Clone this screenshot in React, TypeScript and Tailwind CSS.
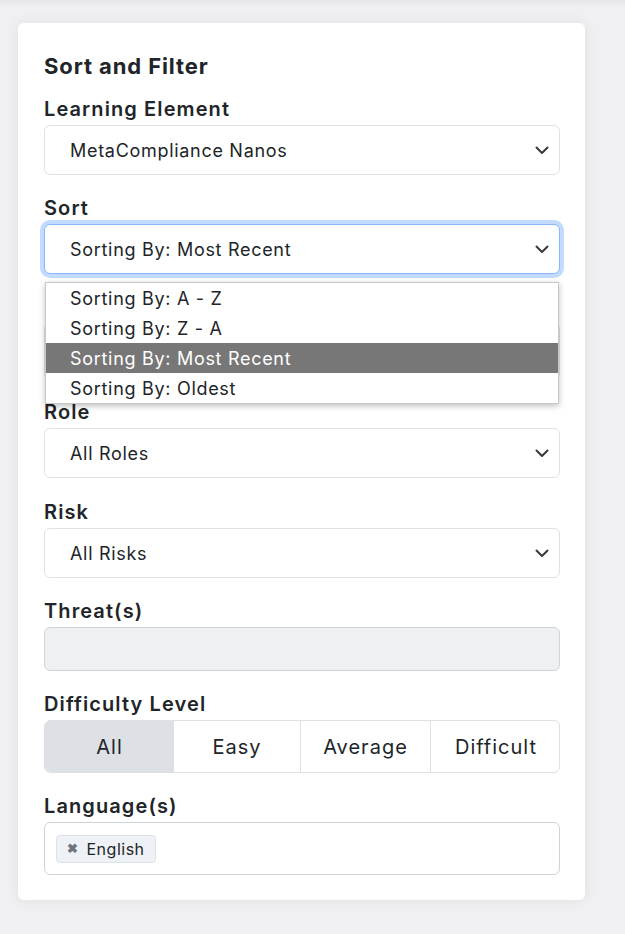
import React from "react";

const font = { fontFamily: "Inter, 'Noto Sans', sans-serif" };

function Chevron() {
  return (
    <svg width="16" height="16" viewBox="0 0 16 16" className="absolute right-[9px] top-1/2 -translate-y-1/2">
      <path d="M2.5 5.5 L8 11 L13.5 5.5" fill="none" stroke="#343a40" strokeWidth="2" strokeLinecap="round" strokeLinejoin="round" />
    </svg>
  );
}

function Label({ children }: { children: React.ReactNode }) {
  return <div className="text-[20px] leading-[24px] font-semibold text-[#212529] mb-[4px] tracking-[1.1px]">{children}</div>;
}

function Select({ value, focused }: { value: string; focused?: boolean }) {
  return (
    <div
      className={
        "relative h-[50px] rounded-[6px] border bg-white flex items-center pl-[25px] text-[18px] tracking-[0.7px] text-[#212529] " +
        (focused ? "border-[#86b7fe] shadow-[0_0_0_4px_#c2dbfe]" : "border-[#dee2e6]")
      }
    >
      <span>{value}</span>
      <Chevron />
    </div>
  );
}

export default function App() {
  const items = ["Sorting By: A - Z", "Sorting By: Z - A", "Sorting By: Most Recent", "Sorting By: Oldest"];
  return (
    <div className="min-h-[934px] bg-[#f0f0f2] pt-[23px] pl-[18px] shadow-[inset_0_10px_10px_-10px_rgba(0,0,0,0.08)]" style={font}>
      <div className="w-[567px] bg-white rounded-[6px] shadow-[0_0_14px_rgba(0,0,0,0.07)] pl-[26px] pr-[25px] pt-[29px] pb-[25px]">
        <div className="text-[22px] leading-[28px] font-bold text-[#212529] mb-[17px] tracking-[0.9px]">Sort and Filter</div>

        <div className="mb-[21px]">
          <Label>Learning Element</Label>
          <Select value="MetaCompliance Nanos" />
        </div>

        <div className="mb-[21px] relative">
          <Label>Sort</Label>
          <Select value="Sorting By: Most Recent" focused />
          <div className="absolute left-[1px] right-[1px] top-[86px] z-10 bg-white border border-[#c8c8c8] shadow-[0_2px_6px_rgba(0,0,0,0.25)]">
            {items.map((it, i) => (
              <div
                key={it}
                className={
                  "h-[30px] flex items-center pl-[24px] text-[18px] tracking-[0.7px] " +
                  (i === 2 ? "bg-[#777777] text-white" : "text-[#212529]")
                }
              >
                {it}
              </div>
            ))}
          </div>
        </div>

        <div className="mb-[21px]">
          <Label>Library</Label>
          <div className="relative h-[56px] rounded-[6px] border border-[#dee2e6] bg-white flex items-center pl-[25px] text-[18px] text-[#212529]">
            <span>All</span>
            <Chevron />
          </div>
        </div>

        <div className="mb-[22px]">
          <Label>Role</Label>
          <Select value="All Roles" />
        </div>

        <div className="mb-[21px]">
          <Label>Risk</Label>
          <Select value="All Risks" />
        </div>

        <div className="mb-[21px]">
          <Label>Threat(s)</Label>
          <div className="h-[44px] rounded-[6px] border border-[#ced4da] bg-[#eff0f2]" />
        </div>

        <div className="mb-[21px]">
          <Label>Difficulty Level</Label>
          <div className="grid grid-cols-[129px_127px_130px_130px] h-[53px] rounded-[6px] border border-[#dee2e6] overflow-hidden text-[20px] tracking-[1px] text-[#212529]">
            <div className="bg-[#dde0e4] flex items-center justify-center">All</div>
            <div className="flex items-center justify-center border-r border-[#dee2e6]">Easy</div>
            <div className="flex items-center justify-center border-r border-[#dee2e6]">Average</div>
            <div className="flex items-center justify-center">Difficult</div>
          </div>
        </div>

        <div>
          <Label>Language(s)</Label>
          <div className="h-[53px] rounded-[6px] border border-[#ced4da] bg-white flex items-center pl-[11px]">
            <div className="h-[28px] flex items-center gap-[8px] px-[10px] rounded-[4px] border border-[#dde2e8] bg-[#eef1f5] text-[16px] tracking-[0.5px] text-[#212529]">
              <span className="text-[#6c757d] text-[13px] font-bold">✖</span>
              <span>English</span>
            </div>
          </div>
        </div>
      </div>
    </div>
  );
}
